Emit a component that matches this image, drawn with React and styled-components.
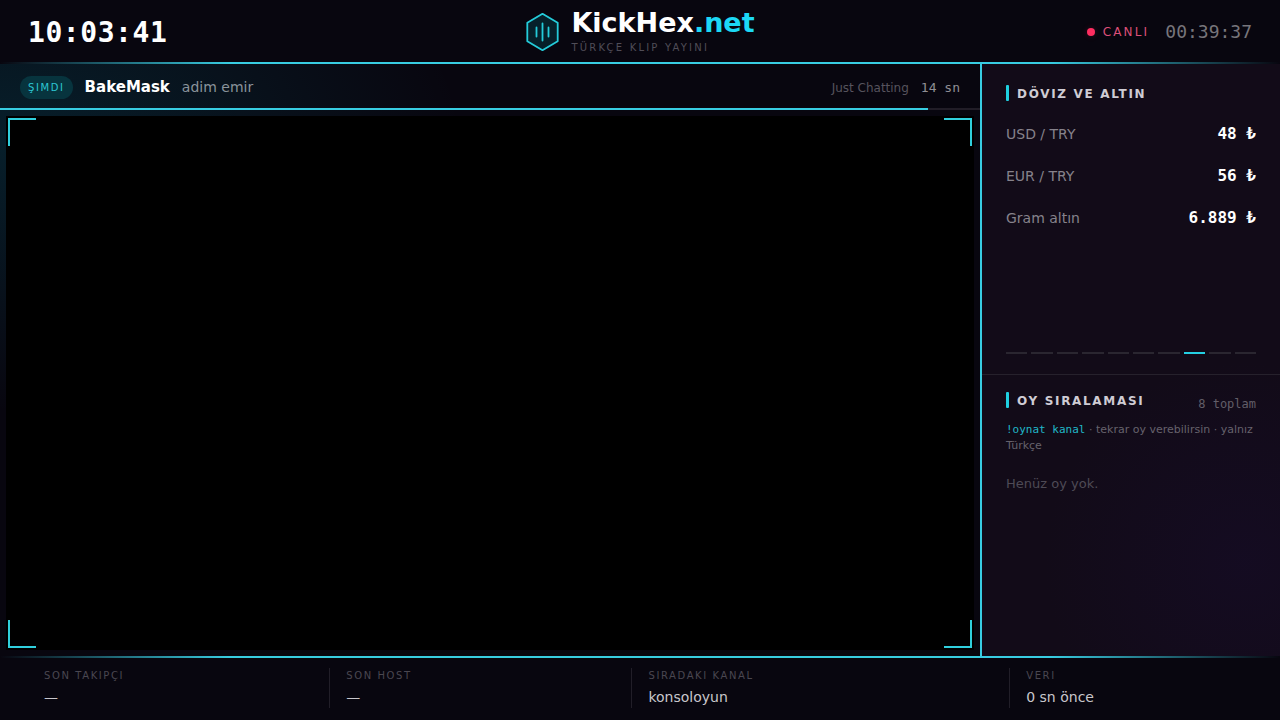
import React from 'react'
import styled, { createGlobalStyle } from 'styled-components'

const GlobalStyle = createGlobalStyle`
  * {
    box-sizing: border-box;
  }
  html, body, #root {
    height: 100%;
  }
  body {
    margin: 0;
    background: #08060f;
    color: #fff;
    font-family: "DejaVu Sans", sans-serif;
    overflow: hidden;
  }
  h1, h2, p, dl, dt, dd {
    margin: 0;
    font-weight: normal;
  }
`

const mono = '"DejaVu Sans Mono", monospace'
const cyan = '#38cde2'

const Page = styled.div`
  height: 100%;
  display: grid;
  grid-template-rows: auto 1fr auto;
  background:
    radial-gradient(ellipse 580px 340px at 0 140px, rgba(0, 200, 230, 0.13), transparent 80%),
    #08060f;
`

const GlowLine = styled.div`
  height: 2px;
  background: linear-gradient(90deg, transparent, ${cyan} 18%, ${cyan} 82%, transparent);
`

const Header = styled.header`
  background: #08060f;
`

const HeaderRow = styled.div`
  height: 62px;
  padding: 2px 28px 0;
  display: grid;
  grid-template-columns: 1fr auto 1fr;
  align-items: center;
`

const Clock = styled.time`
  font-family: ${mono};
  font-size: 28px;
  font-weight: 700;
  letter-spacing: 0.02em;
`

const Brand = styled.div`
  display: flex;
  align-items: center;
  gap: 12px;
`

const BrandText = styled.div`
  padding-bottom: 2px;
`

const BrandName = styled.h1`
  font-size: 27px;
  line-height: 30px;
  font-weight: 700;

  span {
    color: #1cd8f5;
  }
`

const Tagline = styled.p`
  margin-top: 4px;
  font-size: 10px;
  line-height: 12px;
  letter-spacing: 0.22em;
  color: #504d57;
`

const Live = styled.div`
  display: flex;
  align-items: center;
  justify-content: flex-end;
  gap: 16px;
`

const LiveTag = styled.span`
  display: flex;
  align-items: center;
  gap: 8px;
  font-size: 12px;
  letter-spacing: 0.18em;
  color: #dc4f78;

  &::before {
    content: "";
    width: 8px;
    height: 8px;
    border-radius: 50%;
    background: #ff2d60;
    box-shadow: 0 0 6px rgba(255, 45, 96, 0.2);
  }
`

const Uptime = styled.time`
  font-family: ${mono};
  font-size: 18px;
  line-height: 20px;
  color: #77757b;
`

const Body = styled.div`
  display: grid;
  grid-template-columns: 1fr 300px;
  min-height: 0;
`

const Main = styled.main`
  display: flex;
  flex-direction: column;
  min-width: 0;
`

const NowBar = styled.div`
  height: 44px;
  padding: 2px 20px 0;
  display: flex;
  align-items: center;
  gap: 12px;
`

const NowBadge = styled.span`
  padding: 5px 8px;
  border-radius: 12px;
  font-size: 10px;
  line-height: 13px;
  letter-spacing: 0.16em;
  color: #2cc5d2;
  background: #07343e;
`

const Channel = styled.strong`
  font-size: 15px;
`

const ClipTitle = styled.span`
  flex: 1;
  font-size: 14px;
  color: #8a939b;
`

const ClipMeta = styled.div`
  display: flex;
  align-items: baseline;
  gap: 12px;
`

const Category = styled.span`
  font-size: 12px;
  color: #56535d;
`

const Remaining = styled.span`
  font-family: ${mono};
  font-size: 13px;
  color: #8f8d94;
`

const Progress = styled.div`
  height: 2px;
  background: #211d27;

  div {
    height: 100%;
    background: ${cyan};
  }
`

const Stage = styled.div`
  flex: 1;
  margin: 6px;
  padding: 2px;
  display: grid;
  grid-template-columns: 28px 28px;
  grid-template-rows: 28px 28px;
  justify-content: space-between;
  align-content: space-between;
  background: #000;
`

const Corner = styled.i`
  border: 0 solid #30cfdd;
  border-width: ${props => props.$edges};
`

const Side = styled.aside`
  display: flex;
  flex-direction: column;
  border-left: 2px solid ${cyan};
  background:
    radial-gradient(circle at 88% 84%, rgba(24, 12, 48, 0.4), transparent 200px),
    #120b18;
`

const Rates = styled.section`
  height: 311px;
  padding: 21px 24px 20px;
  display: flex;
  flex-direction: column;
  border-bottom: 1px solid #26212c;
`

const Heading = styled.h2`
  display: flex;
  align-items: flex-start;
  gap: 8px;
  font-size: 12px;
  line-height: 18px;
  font-weight: 700;
  letter-spacing: 0.14em;
  color: #cfccd4;

  &::before {
    content: "";
    width: 3px;
    height: 16px;
    border-radius: 1px;
    background: #1fd0e0;
  }
`

const RateList = styled.dl`
  flex: 1;
  margin-top: 10px;
`

const Rate = styled.div`
  padding: 12px 0;
  display: flex;
  align-items: baseline;
  justify-content: space-between;
  line-height: 18px;

  dt {
    font-size: 14px;
    color: #86828b;
  }

  dd {
    font-family: ${mono};
    font-size: 16px;
    font-weight: 700;
  }
`

const Pager = styled.div`
  display: grid;
  grid-template-columns: repeat(10, 1fr);
  gap: 4px;
`

const Dash = styled.span`
  height: 2px;
  background: ${props => (props.$active ? '#24cfe2' : '#2a2630')};
`

const Votes = styled.section`
  padding: 17px 24px;
`

const VotesTop = styled.div`
  display: flex;
  justify-content: space-between;
`

const Total = styled.span`
  padding-top: 3px;
  font-family: ${mono};
  font-size: 12px;
  line-height: 18px;
  color: #625e68;
`

const Hint = styled.p`
  margin-top: 9px;
  font-size: 11px;
  line-height: 16px;
  color: #66626c;

  code {
    font-family: ${mono};
    color: #20b8c8;
  }
`

const Empty = styled.p`
  margin-top: 22px;
  font-size: 13px;
  line-height: 16px;
  color: #4e4a55;
`

const Footer = styled.footer`
  background: #08060f;
`

const Facts = styled.dl`
  height: 62px;
  padding: 10px 28px 12px;
  display: grid;
  grid-template-columns: 1fr 1fr 1.25fr 0.8fr;
`

const Fact = styled.div`
  padding: 0 16px;
  border-right: 1px solid #211e28;

  &:last-child {
    border-right: 0;
  }

  dt {
    font-size: 10px;
    line-height: 16px;
    letter-spacing: 0.16em;
    color: #4a4751;
  }

  dd {
    margin-top: 4px;
    font-size: 14px;
    line-height: 18px;
    color: #c8c6cc;
  }
`

const rates = [
  { name: 'USD / TRY', value: '48 ₺' },
  { name: 'EUR / TRY', value: '56 ₺' },
  { name: 'Gram altın', value: '6.889 ₺' },
]

const facts = [
  { label: 'SON TAKIPÇI', value: '—' },
  { label: 'SON HOST', value: '—' },
  { label: 'SIRADAKI KANAL', value: 'konsoloyun' },
  { label: 'VERI', value: '0 sn önce' },
]

const corners = ['2px 0 0 2px', '2px 2px 0 0', '0 0 2px 2px', '0 2px 2px 0']

const page = 7
const clip = { total: 265, left: 14 }

function Logo() {
  return (
    <svg width="34" height="40" viewBox="0 0 34 40" fill="none" stroke="#24cbd9" aria-hidden="true">
      <path d="M17.5 1.8 32.7 10.8v18.4L17.5 38.2 2.3 29.2V10.8Z" fill="#06202a" strokeWidth="1.8" strokeLinejoin="round" />
      <path d="M11.5 15.5v9M17.5 11.5v17M23.5 15.5v9" strokeWidth="1.8" strokeLinecap="round" />
    </svg>
  )
}

function App() {
  const done = ((clip.total - clip.left) / clip.total) * 100

  return (
    <Page>
      <GlobalStyle />
      <Header>
        <HeaderRow>
          <Clock>10:03:41</Clock>
          <Brand>
            <Logo />
            <BrandText>
              <BrandName>KickHex<span>.net</span></BrandName>
              <Tagline>TÜRKÇE KLIP YAYINI</Tagline>
            </BrandText>
          </Brand>
          <Live>
            <LiveTag>CANLI</LiveTag>
            <Uptime>00:39:37</Uptime>
          </Live>
        </HeaderRow>
        <GlowLine />
      </Header>

      <Body>
        <Main>
          <NowBar>
            <NowBadge>ŞIMDI</NowBadge>
            <Channel>BakeMask</Channel>
            <ClipTitle>adim emir</ClipTitle>
            <ClipMeta>
              <Category>Just Chatting</Category>
              <Remaining>14 sn</Remaining>
            </ClipMeta>
          </NowBar>
          <Progress>
            <div style={{ width: `${done}%` }} />
          </Progress>
          <Stage>
            {corners.map(edges => <Corner key={edges} $edges={edges} />)}
          </Stage>
        </Main>

        <Side>
          <Rates>
            <Heading>DÖVIZ VE ALTIN</Heading>
            <RateList>
              {rates.map(rate => (
                <Rate key={rate.name}>
                  <dt>{rate.name}</dt>
                  <dd>{rate.value}</dd>
                </Rate>
              ))}
            </RateList>
            <Pager>
              {Array.from({ length: 10 }, (_, i) => <Dash key={i} $active={i === page} />)}
            </Pager>
          </Rates>
          <Votes>
            <VotesTop>
              <Heading>OY SIRALAMASI</Heading>
              <Total>8 toplam</Total>
            </VotesTop>
            <Hint><code>!oynat kanal</code> · tekrar oy verebilirsin · yalnız Türkçe</Hint>
            <Empty>Henüz oy yok.</Empty>
          </Votes>
        </Side>
      </Body>

      <Footer>
        <GlowLine />
        <Facts>
          {facts.map(fact => (
            <Fact key={fact.label}>
              <dt>{fact.label}</dt>
              <dd>{fact.value}</dd>
            </Fact>
          ))}
        </Facts>
      </Footer>
    </Page>
  )
}

export default App
